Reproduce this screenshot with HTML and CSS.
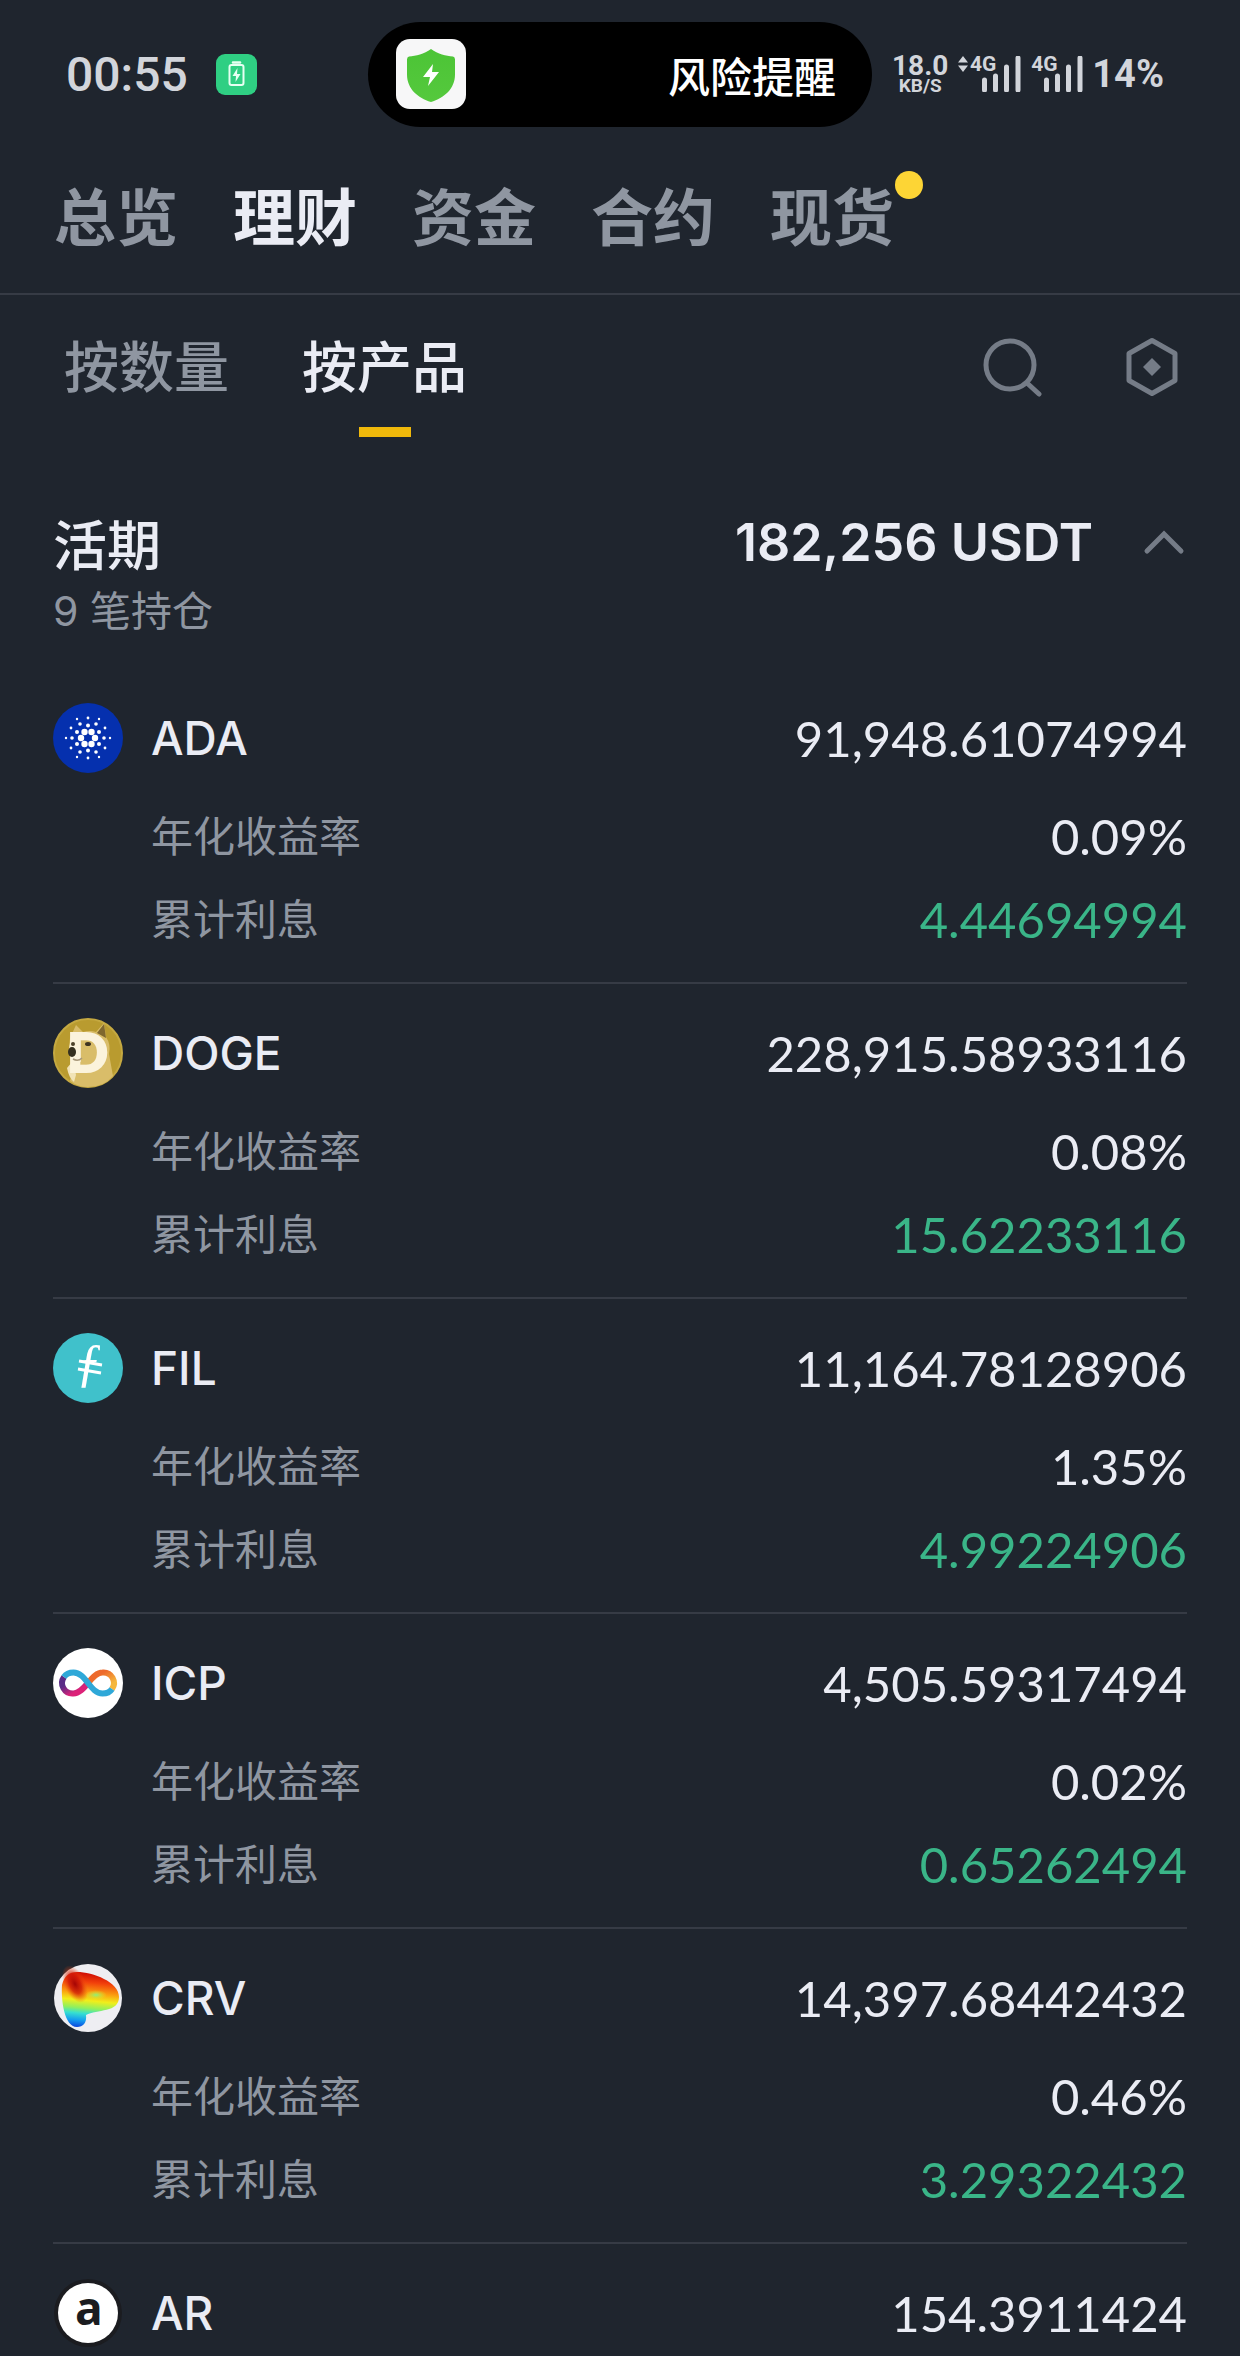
FILE: index.html
```html
<!DOCTYPE html>
<html lang="zh-CN">
<head>
    <meta charset="UTF-8">
    <meta name="viewport" content="width=device-width, initial-scale=1.0">
    <title>理财</title>
    <link rel="stylesheet" href="styles.css">
</head>
<body>

    <!-- Status bar -->
    <div class="status-bar">
        <div class="status-left">
            <span class="clock">00:55</span>
            <svg class="battery" viewBox="0 0 41 41">
                <rect width="41" height="41" rx="9" fill="#2fcf83"/>
                <rect x="13.500" y="11" width="14" height="20" rx="2" fill="none" stroke="#e6fff2" stroke-width="2"/>
                <path d="M17 8.500h7" stroke="#e6fff2" stroke-width="2.500" stroke-linecap="round"/>
                <path d="M21.500 14l-5 8h3.500l-.5 6 5-8h-3.500z" fill="#e6fff2"/>
            </svg>
        </div>
        <div class="island">
            <svg class="shield" viewBox="0 0 70 70">
                <defs>
                    <linearGradient id="shieldFill" x1="0" y1="0" x2="0" y2="1">
                        <stop offset="0" stop-color="#4cc436"/>
                        <stop offset="1" stop-color="#55c93d"/>
                    </linearGradient>
                </defs>
                <rect width="70" height="70" rx="14" fill="#f7f7f8"/>
                <path d="M35 10c7 5 15 7 22 7.500q2 .5 2 3v15C59 50 48 59 35 63 22 59 11 50 11 35.500v-15q0-2.500 2-3C20 17 28 15 35 10z" fill="url(#shieldFill)"/>
                <path d="M37 25L27 38h7l-2 9 11-14h-7z" fill="#fff"/>
            </svg>
            <span>风险提醒</span>
        </div>
        <div class="status-right">
            <div class="speed"><b>18.0</b><small>KB/S</small></div>
            <div class="signal">
                <svg class="arrows" viewBox="0 0 10 16"><path d="M0 6.500L5 0l5 6.500zM0 9.500L5 16l5-6.500z" fill="#d2d5db"/></svg>
                <span>4G</span>
                <svg class="bars" viewBox="0 0 39 36"><path d="M2.500 24v10M13.500 20v14M24.500 11v23M36 2v32" stroke="#d2d5db" stroke-width="5" stroke-linecap="round"/></svg>
            </div>
            <div class="signal">
                <span>4G</span>
                <svg class="bars" viewBox="0 0 39 36"><path d="M2.500 24v10M13.500 20v14M24.500 11v23M36 2v32" stroke="#d2d5db" stroke-width="5" stroke-linecap="round"/></svg>
            </div>
            <span class="percent">14%</span>
        </div>
    </div>

    <!-- Main tabs -->
    <nav class="tabs">
        <a href="#">总览</a>
        <a href="#" class="active">理财</a>
        <a href="#">资金</a>
        <a href="#">合约</a>
        <a href="#" class="has-dot">现货</a>
    </nav>

    <!-- Sub tabs -->
    <div class="toolbar">
        <button class="sub-tab">按数量</button>
        <button class="sub-tab active">按产品</button>
        <div class="tools">
            <button aria-label="搜索">
                <svg width="60" height="60" viewBox="0 0 60 60" fill="none" stroke="#757c87" stroke-width="5" stroke-linecap="round">
                    <circle cx="28" cy="28" r="24"/>
                    <path d="M45 46l12 11"/>
                </svg>
            </button>
            <button aria-label="设置">
                <svg width="60" height="60" viewBox="0 0 60 60" fill="none" stroke="#757c87" stroke-width="5" stroke-linejoin="round">
                    <path d="M30 3.500L53 16.500v27L30 56.500 7 43.500v-27z"/>
                    <path d="M30 21l9 9-9 9-9-9z" fill="#757c87" stroke="none"/>
                </svg>
            </button>
        </div>
    </div>

    <main>
        <div class="summary">
            <h2>活期</h2>
            <span class="total">182,256 USDT</span>
            <button aria-label="收起">
                <svg width="44" height="28" viewBox="0 0 44 28" fill="none" stroke="#757c87" stroke-width="5" stroke-linecap="round">
                    <path d="M4 23L21 6l17 17"/>
                </svg>
            </button>
        </div>
        <p class="count">9 笔持仓</p>

        <ul class="coins">
            <li>
                <div class="coin-head">
                    <svg class="logo" viewBox="0 0 70 70">
                        <circle cx="35" cy="35" r="35" fill="#0530ae"/>
                        <g fill="#fff">
                            <circle cx="28" cy="35" r="3.200"/><circle cx="42" cy="35" r="3.200"/>
                            <circle cx="31.500" cy="29" r="3.200"/><circle cx="38.500" cy="29" r="3.200"/>
                            <circle cx="31.500" cy="41" r="3.200"/><circle cx="38.500" cy="41" r="3.200"/>
                            <circle cx="35" cy="22.500" r="2"/><circle cx="35" cy="47.500" r="2"/>
                            <circle cx="24" cy="29" r="2"/><circle cx="46" cy="29" r="2"/>
                            <circle cx="24" cy="41" r="2"/><circle cx="46" cy="41" r="2"/>
                            <circle cx="27" cy="21" r="1.800"/><circle cx="43" cy="21" r="1.800"/>
                            <circle cx="27" cy="49" r="1.800"/><circle cx="43" cy="49" r="1.800"/>
                            <circle cx="19" cy="35" r="1.800"/><circle cx="51" cy="35" r="1.800"/>
                            <circle cx="18" cy="25" r="1.400"/><circle cx="52" cy="25" r="1.400"/>
                            <circle cx="18" cy="45" r="1.400"/><circle cx="52" cy="45" r="1.400"/>
                            <circle cx="35" cy="15" r="1.400"/><circle cx="35" cy="55" r="1.400"/>
                            <circle cx="24" cy="16" r="1.200"/><circle cx="46" cy="16" r="1.200"/>
                            <circle cx="24" cy="54" r="1.200"/><circle cx="46" cy="54" r="1.200"/>
                            <circle cx="13" cy="35" r="1.200"/><circle cx="57" cy="35" r="1.200"/>
                        </g>
                    </svg>
                    <h3>ADA</h3>
                    <span class="amount">91,948.61074994</span>
                </div>
                <dl>
                    <dt>年化收益率</dt><dd>0.09%</dd>
                    <dt>累计利息</dt><dd class="profit">4.44694994</dd>
                </dl>
            </li>
            <li>
                <div class="coin-head">
                    <svg class="logo" viewBox="0 0 70 70">
                        <circle cx="35" cy="35" r="34" fill="#b99b2f" stroke="#c5a941" stroke-width="2"/>
                        <path d="M17 20l6-13 7 7q7-2 13 0l8-9 2 14q5 7 3 17l4 22q-9 11-25 11-10 0-18-6l4-18q-7-8-5-15z" fill="#d9bd69"/>
                        <path d="M24 14q-9 8-8 22 4 7 12 8V14z" fill="#f0e3bd"/>
                        <path d="M44 15l7-9 2 14z" fill="#7f672e"/>
                        <path d="M14 50l6-7 3 14-2 7q-5-4-7-14z" fill="#f1e3b7"/>
                        <text class="doge-mark" x="14" y="54">D</text>
                        <ellipse cx="19" cy="34" rx="4" ry="5" fill="#35301f"/>
                        <ellipse cx="35" cy="26" rx="3" ry="2" fill="#3d3321"/>
                        <ellipse cx="20" cy="26" rx="2" ry="2" fill="#4c4229"/>
                        <path d="M20 41q5 3 9-1" fill="none" stroke="#a8987a" stroke-width="1.500"/>
                    </svg>
                    <h3>DOGE</h3>
                    <span class="amount">228,915.58933116</span>
                </div>
                <dl>
                    <dt>年化收益率</dt><dd>0.08%</dd>
                    <dt>累计利息</dt><dd class="profit">15.62233116</dd>
                </dl>
            </li>
            <li>
                <div class="coin-head">
                    <svg class="logo" viewBox="0 0 70 70">
                        <circle cx="35" cy="35" r="35" fill="#40c1cb"/>
                        <text class="fil-mark" x="36" y="47">ƒ</text>
                        <path d="M26 28l23 4M25 36l23 4" stroke="#fff" stroke-width="3"/>
                    </svg>
                    <h3>FIL</h3>
                    <span class="amount">11,164.78128906</span>
                </div>
                <dl>
                    <dt>年化收益率</dt><dd>1.35%</dd>
                    <dt>累计利息</dt><dd class="profit">4.99224906</dd>
                </dl>
            </li>
            <li>
                <div class="coin-head">
                    <svg class="logo" viewBox="0 0 70 70">
                        <defs>
                            <linearGradient id="icpLeft" x1="0" y1="0" x2="1" y2="1">
                                <stop offset="0.300" stop-color="#5a2b86"/>
                                <stop offset="0.700" stop-color="#dc2278"/>
                            </linearGradient>
                            <linearGradient id="icpRight" x1="0" y1="0" x2="1" y2="1">
                                <stop offset="0.300" stop-color="#ed6a2c"/>
                                <stop offset="0.800" stop-color="#f5b73c"/>
                            </linearGradient>
                        </defs>
                        <circle cx="35" cy="35" r="35" fill="#fff"/>
                        <g fill="none" stroke-width="6">
                            <path d="M35 35C30 41 26 45.500 20.500 45.500A10.500 10.500 0 0 1 11 29" stroke="url(#icpLeft)"/>
                            <path d="M35 35C40 29 44 24.500 49.500 24.500A10.500 10.500 0 0 1 59 41" stroke="url(#icpRight)"/>
                            <path d="M11 29Q14 24.500 20.500 24.500C33 24.500 37 45.500 49.500 45.500Q56 45.500 59 41" stroke="#2fa8d8"/>
                        </g>
                    </svg>
                    <h3>ICP</h3>
                    <span class="amount">4,505.59317494</span>
                </div>
                <dl>
                    <dt>年化收益率</dt><dd>0.02%</dd>
                    <dt>累计利息</dt><dd class="profit">0.65262494</dd>
                </dl>
            </li>
            <li>
                <div class="coin-head">
                    <svg class="logo" viewBox="0 0 70 70">
                        <defs>
                            <linearGradient id="crvBody" x1="0.100" y1="0" x2="0" y2="1">
                                <stop offset="0" stop-color="#d31206"/>
                                <stop offset="0.150" stop-color="#f2410b"/>
                                <stop offset="0.350" stop-color="#fba40f"/>
                                <stop offset="0.480" stop-color="#f1ee1b"/>
                                <stop offset="0.620" stop-color="#8ff05e"/>
                                <stop offset="0.720" stop-color="#36e0d0"/>
                                <stop offset="0.850" stop-color="#149cf0"/>
                                <stop offset="1" stop-color="#0a35d8"/>
                            </linearGradient>
                            <radialGradient id="crvHot">
                                <stop offset="0" stop-color="#a50505"/>
                                <stop offset="0.500" stop-color="#d01808" stop-opacity="0.800"/>
                                <stop offset="1" stop-color="#f05010" stop-opacity="0"/>
                            </radialGradient>
                            <radialGradient id="crvMid">
                                <stop offset="0" stop-color="#8cf07a"/>
                                <stop offset="1" stop-color="#e9ee20" stop-opacity="0"/>
                            </radialGradient>
                        </defs>
                        <circle cx="35" cy="35" r="34" fill="#eeeef2"/>
                        <path d="M9 22Q12 9 24 9c16 0 42 10 42 25 0 16-22 12-33 18 1 8-3 12-9 12C11 64 8 36 9 22z" fill="url(#crvBody)"/>
                        <ellipse cx="22" cy="21" rx="11" ry="20" transform="rotate(-25 22 21)" fill="url(#crvHot)"/>
                        <ellipse cx="43" cy="32" rx="11" ry="5" fill="url(#crvMid)"/>
                    </svg>
                    <h3>CRV</h3>
                    <span class="amount">14,397.68442432</span>
                </div>
                <dl>
                    <dt>年化收益率</dt><dd>0.46%</dd>
                    <dt>累计利息</dt><dd class="profit">3.29322432</dd>
                </dl>
            </li>
            <li>
                <div class="coin-head">
                    <svg class="logo" viewBox="0 0 70 70">
                        <circle cx="35" cy="35" r="34" fill="#1b1c20"/>
                        <circle cx="35" cy="35" r="30" fill="#fff"/>
                        <text class="ar-mark" x="36" y="47">a</text>
                    </svg>
                    <h3>AR</h3>
                    <span class="amount">154.3911424</span>
                </div>
            </li>
        </ul>
    </main>

</body>
</html>
```
FILE: styles.css
```css
* {
    box-sizing: border-box;
}
body {
    margin: 0;
    background-color: #1f252e;
    color: #eaecf4;
    font-family: Inter, "Noto Sans CJK SC", sans-serif;
}
h2, h3, p, ul, dl, dd {
    margin: 0;
    padding: 0;
}
a {
    color: inherit;
    text-decoration: none;
}
button {
    padding: 0;
    border: none;
    background: none;
    color: inherit;
    font-family: inherit;
    cursor: pointer;
}
svg {
    display: block;
    flex-shrink: 0;
}

/* Status bar */
.status-bar {
    display: grid;
    grid-template-columns: 1fr auto 1fr;
    align-items: center;
    height: 148px;
    padding: 0 66px;
    color: #d2d5db;
    font-family: Roboto, "Noto Sans CJK SC", sans-serif;
}
.status-left {
    display: flex;
    align-items: center;
    gap: 28px;
}
.clock {
    font-size: 48px;
    font-weight: 500;
}
.battery {
    width: 41px;
    height: 41px;
}
.island {
    display: flex;
    align-items: center;
    justify-content: space-between;
    width: 504px;
    height: 105px;
    padding: 0 36px 0 28px;
    border-radius: 53px;
    background-color: #000;
    color: #fff;
    font-size: 42px;
    font-weight: 500;
}
.shield {
    width: 70px;
    height: 70px;
}
.status-right {
    display: flex;
    align-items: center;
    justify-content: space-between;
    padding: 0 10px 0 20px;
}
.speed {
    display: flex;
    flex-direction: column;
    align-items: center;
}
.speed b {
    font-size: 28px;
    line-height: 24px;
}
.speed small {
    font-size: 19px;
    font-weight: 700;
    line-height: 16px;
}
.signal {
    display: flex;
    align-items: flex-start;
}
.signal span {
    margin-right: -14px;
    font-size: 21px;
    font-weight: 700;
    line-height: 16px;
}
.arrows {
    width: 10px;
    height: 16px;
    margin-right: 2px;
}
.bars {
    width: 39px;
    height: 36px;
}
.percent {
    font-size: 38px;
    font-weight: 700;
}

/* Main tabs */
.tabs {
    display: flex;
    gap: 55px;
    padding: 26px 54px 29px;
    border-bottom: 2px solid #363b45;
    color: #8f96a1;
    font-size: 62px;
    font-weight: 700;
    line-height: 90px;
}
.tabs .active {
    color: #eaecf4;
}
.has-dot {
    position: relative;
}
.has-dot::after {
    content: "";
    position: absolute;
    top: -3px;
    right: -29px;
    width: 28px;
    height: 28px;
    border-radius: 50%;
    background-color: #fdd535;
}

/* Sub tabs */
.toolbar {
    display: flex;
    align-items: flex-start;
    gap: 73px;
    padding: 32px 58px 0 64px;
}
.sub-tab {
    display: flex;
    flex-direction: column;
    align-items: center;
    color: #8f96a1;
    font-size: 55px;
    font-weight: 500;
    line-height: 80px;
}
.sub-tab.active {
    color: #eaecf4;
}
.sub-tab.active::after {
    content: "";
    width: 52px;
    height: 10px;
    margin-top: 20px;
    background-color: #f0b90b;
}
.tools {
    display: flex;
    gap: 80px;
    margin-left: auto;
    padding-top: 10px;
}

/* Product summary */
main {
    padding: 66px 53px 0;
}
.summary {
    display: flex;
    align-items: center;
    height: 78px;
}
.summary h2 {
    font-size: 54px;
    font-weight: 500;
}
.total {
    margin: 0 50px 0 auto;
    font-size: 52px;
    font-weight: 600;
}
.count {
    color: #8f96a1;
    font-size: 41px;
    line-height: 60px;
}

/* Coin list */
.coins {
    margin-top: 28px;
    list-style: none;
}
.coins li {
    padding: 34px 0 21px;
    border-bottom: 2px solid #363b45;
}
.coins li:last-child {
    padding-bottom: 0;
    border-bottom: none;
}
.coin-head {
    display: flex;
    align-items: center;
    height: 70px;
}
.logo {
    width: 70px;
    height: 70px;
    margin-right: 28px;
}
.coin-head h3 {
    font-size: 46px;
    font-weight: 500;
}
.amount {
    margin-left: auto;
}
.amount, dd {
    font-family: Lato, sans-serif;
    font-size: 49px;
}
dl {
    display: grid;
    grid-template-columns: 1fr auto;
    margin-top: 22px;
    padding-left: 98px;
    line-height: 83px;
}
dt {
    color: #8f96a1;
    font-size: 42px;
}
dd {
    text-align: right;
}
.profit {
    color: #3ab588;
}

/* Letters inside coin logos */
.doge-mark {
    fill: #fbf3dc;
    stroke: #fbf3dc;
    stroke-width: 2px;
    font: 900 54px Lato, sans-serif;
}
.fil-mark {
    fill: #fff;
    font: italic 52px "Liberation Serif", serif;
    text-anchor: middle;
}
.ar-mark {
    fill: #1b1c20;
    font: 700 46px "Open Sans", sans-serif;
    text-anchor: middle;
}
```
